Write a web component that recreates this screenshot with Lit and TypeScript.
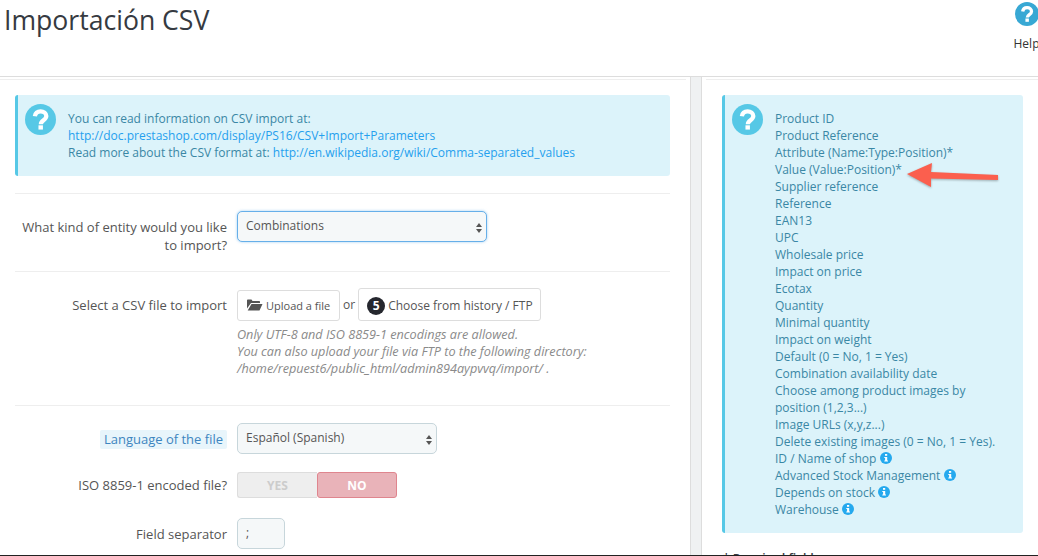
import { LitElement, html, css, svg } from "lit";
import { customElement } from "lit/decorators.js";

const question = (size: number, color: string) => html`<svg class="q" width=${size} height=${size} viewBox="0 0 32 32"><circle cx="16" cy="16" r="16" fill=${color}></circle><path fill="none" stroke="#fff" stroke-width="4.4" d="M10.200 12.600c.5-3.200 2.900-5 5.900-5 3.200 0 5.900 2 5.900 4.900 0 4.400-5.600 4.200-5.600 8.300"></path><rect x="13.900" y="22" width="4.600" height="4.400" fill="#fff"></rect></svg>`;

const info = html`<svg class="i" width="12" height="12" viewBox="0 0 12 12"><circle cx="6" cy="6" r="6" fill="#25a9ee"></circle><rect x="5" y="2" width="2.200" height="1.800" fill="#fff"></rect><path fill="#fff" d="M4.300 4.900h2.900v3.600h.8v1H4.300v-1h.8V5.900h-.8z"></path></svg>`;

const fields = [
  "Product ID", "Product Reference", "Attribute (Name:Type:Position)*", "Value (Value:Position)*",
  "Supplier reference", "Reference", "EAN13", "UPC", "Wholesale price", "Impact on price", "Ecotax",
  "Quantity", "Minimal quantity", "Impact on weight", "Default (0 = No, 1 = Yes)",
  "Combination availability date", "Choose among product images by position (1,2,3...)", "Image URLs (x,y,z...)",
  "Delete existing images (0 = No, 1 = Yes).",
];
const infoFields = ["ID / Name of shop", "Advanced Stock Management", "Depends on stock", "Warehouse"];

const arrowShape = svg`<path d="M907 174 L932 163 L931 172 L998 175 L998 180 L931 178.500 L931 187 Z" fill="#fb5f4e"></path>`;

@customElement("app-root")
export class AppRoot extends LitElement {
  static styles = css`
    :host {
      display: block; position: relative; width: 1038px; height: 556px; overflow: hidden; background: #fff;
      font-family: "Open Sans", sans-serif; font-size: 12px; line-height: 17px; color: #555;
    }
    a { color: #25a0ee; text-decoration: none; }
    .head { display: flex; justify-content: space-between; height: 76px; border-bottom: 1px solid #ddd; box-sizing: content-box; }
    h1 { margin: 0; padding: 2px 0 0 4px; font-size: 26.600px; line-height: 36px; font-weight: 400; color: #363a41; }
    .help { width: 28px; margin-right: -3px; display: flex; flex-direction: column; align-items: center; padding-top: 2px; color: #333; white-space: nowrap; }
    .help span { margin-top: 9px; margin-left: -1px; }
    .cols { display: flex; height: 479px; }
    .left { width: 690px; flex: none; padding-top: 2px; box-sizing: border-box; }
    .gutter { width: 12px; flex: none; background: #eff1f2; border-left: 1px solid #ddd; border-right: 1px solid #ddd; box-sizing: border-box; }
    .right { flex: 1; padding-top: 2px; }
    .tl { border-top: 1px solid #eee; margin-right: 4px; }
    .right .tl { margin: 0 0 0 4px; }
    .pad { padding: 15px 20px 0 15px; }
    .right .pad { padding: 15px 15px 0 20px; }
    .alert { display: flex; background: #dcf3fa; border-left: 3px solid #56c8e6; border-radius: 3px; color: #3a87a5; padding: 9px 0 0 7px; box-sizing: border-box; }
    .alert .q { flex: none; margin-right: 12px; }
    .alert.top { height: 81px; }
    .alert.side { height: 438px; width: 301px; }
    .alert .t { padding-top: 6px; }
    .alert.side .t { width: 225px; }
    .i { vertical-align: -1px; }
    .form { margin-top: 17px; }
    .row { display: flex; }
    .lab { width: 212px; flex: none; text-align: right; margin-right: 10px; font-size: 13px; line-height: 18px; color: #555; }
    .r1 { border-top: 1px solid #eee; height: 78px; padding-top: 17px; box-sizing: border-box; }
    .r1 .lab { padding-top: 7px; }
    .r2 { border-top: 1px solid #eee; height: 134px; padding-top: 16px; box-sizing: border-box; }
    .r2 .lab { padding-top: 8px; }
    .sel { position: relative; box-sizing: border-box; height: 31px; background: #f5f8f9; border: 1px solid #c7d6db; border-radius: 5px; padding: 5px 8px; line-height: 18px; color: #555; font-size: 12px; }
    .sel.focus { width: 250px; border-color: #66afe9; box-shadow: 0 0 3px rgba(102,175,233,.6); }
    .sel.lang { width: 200px; }
    .sel svg { position: absolute; right: 3px; top: 10px; }
    .btns { display: flex; align-items: center; color: #555; }
    .btn { box-sizing: border-box; display: flex; align-items: center; background: #fff; border: 1px solid #ddd; border-radius: 3px; color: #555; white-space: nowrap; }
    .up { width: 103px; height: 31px; padding-left: 9px; font-size: 11px; margin-top: 1px; }
    .up svg { margin-right: 3px; }
    .or { margin: 0 3px; }
    .ch { width: 183px; height: 33px; padding: 2px 0 0 8px; }
    .num { width: 18px; height: 18px; border-radius: 50%; background: #25272e; color: #fff; font-weight: 700; font-size: 12px; display: flex; align-items: center; justify-content: center; margin-right: 3px; }
    .hint { font-style: italic; font-size: 12.670px; color: #8a8a8a; margin-top: 5px; white-space: nowrap; }
    .r3 { border-top: 1px solid #eee; height: 67px; padding-top: 17px; box-sizing: border-box; }
    .r3 .lab { padding-top: 7px; }
    .pill { display: inline-block; background: #e8f5fb; color: #3d85c0; padding: 0 4px 0 4px; line-height: 19px; border-radius: 2px; }
    .mid { align-items: center; }
    .r4 { height: 26px; margin-bottom: 20px; }
    .sw { display: flex; width: 160px; height: 26px; box-sizing: border-box; font-weight: 700; font-size: 12px; }
    .sw div { width: 80px; display: flex; align-items: center; justify-content: center; box-sizing: border-box; }
    .yes { background: #eee; color: #ccc; border: 1px solid #ddd; border-right: none; border-radius: 3px 0 0 3px; }
    .no { background: #e9b3b9; color: #fff; border: 1px solid #df858e; border-radius: 3px; }
    .inp { width: 48px; }
    .req { margin: 17px 0 0 1px; color: #363a41; white-space: nowrap; font-weight: 600; }
    .bar { position: absolute; left: 0; right: 0; bottom: 0; height: 1px; background: #222; }
    .arrow { position: absolute; left: 0; top: 0; pointer-events: none; filter: drop-shadow(0 1px 1px rgba(0,0,0,.3)); }
  `;

  render() {
    const updown = html`<svg width="8" height="12" viewBox="0 0 8 12"><path fill="#555" d="M4 1 7 5H1zM4 11 1 7h6z"></path></svg>`;
    return html`
      <div class="head">
        <h1>Importación CSV</h1>
        <div class="help">${question(24, "#38a8d4")}<span>Help</span></div>
      </div>
      <div class="cols">
        <div class="left">
          <div class="tl"></div>
          <div class="pad">
            <div class="alert top">
              ${question(31, "#56c8e6")}
              <div class="t">You can read information on CSV import at:<br />
                <a>http://doc.prestashop.com/display/PS16/CSV+Import+Parameters</a><br />
                Read more about the CSV format at: <a>http://en.wikipedia.org/wiki/Comma-separated_values</a>
              </div>
            </div>
            <div class="form">
              <div class="row r1">
                <div class="lab">What kind of entity would you like to import?</div>
                <div class="sel focus">Combinations${updown}</div>
              </div>
              <div class="row r2">
                <div class="lab">Select a CSV file to import</div>
                <div>
                  <div class="btns">
                    <div class="btn up">
                      <svg width="16" height="12" viewBox="0 0 16 12"><path fill="#555" d="M0 1.500C0 .8.5.5 1 .5h3.500l1 1.500H12c.6 0 1 .4 1 1v1H4L0 9.500zM4.500 5H15.500L12.500 11.500H.7z"></path></svg>
                      Upload a file
                    </div>
                    <span class="or">or</span>
                    <div class="btn ch"><span class="num">5</span>Choose from history / FTP</div>
                  </div>
                  <div class="hint">Only UTF-8 and ISO 8859-1 encodings are allowed.<br />
                    You can also upload your file via FTP to the following directory:<br />
                    /home/repuest6/public_html/admin894aypvvq/import/ .</div>
                </div>
              </div>
              <div class="row r3">
                <div class="lab"><span class="pill">Language of the file</span></div>
                <div class="sel lang">Español (Spanish)${updown}</div>
              </div>
              <div class="row mid r4">
                <div class="lab">ISO 8859-1 encoded file?</div>
                <div class="sw"><div class="yes">YES</div><div class="no">NO</div></div>
              </div>
              <div class="row mid">
                <div class="lab">Field separator</div>
                <div class="sel inp">;</div>
              </div>
            </div>
          </div>
        </div>
        <div class="gutter"></div>
        <div class="right">
          <div class="tl"></div>
          <div class="pad">
            <div class="alert side">
              ${question(31, "#56c8e6")}
              <div class="t">
                ${fields.map((f) => html`<div>${f}</div>`)}
                ${infoFields.map((f) => html`<div>${f} ${info}</div>`)}
              </div>
            </div>
            <div class="req">* Required fields</div>
          </div>
        </div>
      </div>
      <div class="bar"></div>
      <svg class="arrow" width="1038" height="556" viewBox="0 0 1038 556">${arrowShape}</svg>
    `;
  }
}
